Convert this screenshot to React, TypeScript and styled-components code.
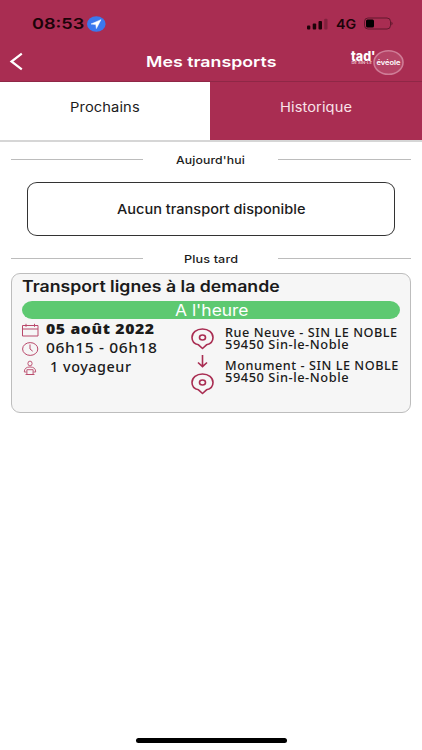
import React, { useLayoutEffect, useRef, useState } from "react";
import styled, { createGlobalStyle } from "styled-components";

const brand = "#a92d52";

const GlobalStyle = createGlobalStyle`
  * { box-sizing: border-box; }
  html, body { margin: 0; background: #fff; }
  body { font-family: Inter, "Liberation Sans", sans-serif; color: #1b1b1b; }
`;

/* Text widened to fill a given width */
const FitBox = styled.span<{ $w: number }>`
  display: block;
  width: ${(p) => p.$w}px;
  flex: none;
  white-space: pre;
`;
const FitInner = styled.span`
  display: inline-block;
  transform-origin: 0 50%;
`;
function Fit({ w, children }: { w: number; children: string }) {
  const ref = useRef<HTMLSpanElement>(null);
  const [scale, setScale] = useState(1);
  useLayoutEffect(() => {
    if (ref.current) setScale(w / ref.current.offsetWidth);
  }, [w, children]);
  return (
    <FitBox $w={w}>
      <FitInner ref={ref} style={{ transform: `scaleX(${scale})` }}>
        {children}
      </FitInner>
    </FitBox>
  );
}

const Screen = styled.div`
  width: 422px;
  height: 750px;
  display: flex;
  flex-direction: column;
  overflow: hidden;
  background: #fff;
`;
const Header = styled.header`
  height: 82px;
  flex: none;
  background: ${brand};
  border-bottom: 1px solid #8f2746;
`;
const StatusBar = styled.div`
  height: 43px;
  padding: 4px 29px 0 32px;
  display: flex;
  align-items: center;
  color: #1c0309;
  font-size: 15px;
  font-weight: 600;
  line-height: 20px;
`;
const LocationIcon = styled.svg`
  margin-left: 3px;
`;
const StatusRight = styled.div`
  margin-left: auto;
  display: flex;
  align-items: center;
  gap: 8px;
  font-size: 13.5px;
`;
const NavBar = styled.div`
  height: 38px;
  display: grid;
  grid-template-columns: 146px 1fr 72px;
  align-items: center;
`;
const BackIcon = styled.svg`
  margin-left: 9px;
`;
const Title = styled.h1`
  margin: 0;
  color: #fff;
  font-size: 14.5px;
  font-weight: 600;
  line-height: 20px;
`;
const Tabs = styled.nav`
  display: grid;
  grid-template-columns: 210px 212px;
  height: 60px;
  flex: none;
  border-bottom: 2px solid #d6d6d6;
`;
const Tab = styled.div<{ $filled?: boolean }>`
  display: flex;
  justify-content: center;
  padding-top: 15px;
  font-size: 13px;
  line-height: 20px;
  letter-spacing: 0.1px;
  background: ${(p) => (p.$filled ? brand : "#fff")};
  color: ${(p) => (p.$filled ? "#f9e3ea" : "#1b1b1b")};
`;
const Divider = styled.div`
  display: grid;
  grid-template-columns: 132px 1fr 133px;
  align-items: center;
  justify-items: center;
  margin: 0 11px;
  height: 20px;
  flex: none;
  font-size: 11px;
  font-weight: 500;
  line-height: 20px;
  letter-spacing: 0.1px;
`;
const Rule = styled.div`
  width: 100%;
  height: 1px;
  background: #bcbcbc;
  margin-bottom: 2px;
`;
const Content = styled.main`
  display: flex;
  flex-direction: column;
  padding-top: 8px;
`;
const EmptyBox = styled.div`
  margin: 12px 27px 13px;
  width: 368px;
  height: 54px;
  flex: none;
  border: 1px solid #333;
  border-radius: 10px / 9px;
  display: flex;
  align-items: center;
  justify-content: center;
  font-size: 13px;
  font-weight: 500;
`;
const Card = styled.section`
  margin: 4px 11px 0;
  height: 140px;
  flex: none;
  padding: 3px 10px 0;
  border: 1px solid #bdbdbd;
  border-radius: 9px;
  background: #f6f6f6;
`;
const CardTitle = styled.h2`
  margin: 0;
  font-size: 15.5px;
  font-weight: 600;
  line-height: 20px;
`;
const Status = styled.div`
  margin-top: 4px;
  height: 18px;
  border-radius: 10px / 9px;
  background: #5dc971;
  color: #fff;
  display: flex;
  justify-content: center;
  font-size: 15.5px;
  line-height: 19px;
`;
const Details = styled.div`
  display: grid;
  grid-template-columns: 168px 35px 1fr;
`;
const Info = styled.div`
  padding-top: 1px;
`;
const InfoRow = styled.div<{ $bold?: boolean; $indent?: number }>`
  height: 19px;
  display: grid;
  grid-template-columns: ${(p) => 24 + (p.$indent || 0)}px 1fr;
  align-items: center;
  font-family: "Noto Sans", sans-serif;
  font-size: 13.5px;
  line-height: 19px;
  letter-spacing: 0.5px;
  font-weight: ${(p) => (p.$bold ? 900 : 500)};
`;
const Route = styled.svg`
  margin-top: 8px;
`;
const Stops = styled.div`
  padding-top: 7px;
  display: flex;
  flex-direction: column;
  gap: 9px;
`;
const Stop = styled.div`
  font-family: "Noto Sans", sans-serif;
  font-size: 11.8px;
  font-weight: 500;
  line-height: 12px;
  letter-spacing: 0.5px;
`;
const HomeBar = styled.div`
  width: 151px;
  height: 5px;
  flex: none;
  border-radius: 3px;
  background: #000;
  margin: auto auto 7px 136px;
`;

function Logo() {
  return (
    <svg width="56" height="28" viewBox="0 0 56 28">
      <ellipse cx="38.500" cy="14.500" rx="14.500" ry="11.800" fill="#b54466" stroke="#cf7c96" strokeWidth="1.600" />
      <g fill="#fff" fontFamily="Inter, sans-serif">
        <text x="1" y="13" fontSize="13" fontWeight="800" textLength="24.500" lengthAdjust="spacingAndGlyphs">tad'</text>
        <text x="1.500" y="16.400" fontSize="3.300" fontWeight="600" fill="#f1ccd7" textLength="20.500" lengthAdjust="spacingAndGlyphs">DE SIN-LE</text>
        <text x="26.500" y="16.800" fontSize="6.800" fontWeight="600" textLength="24" lengthAdjust="spacingAndGlyphs">évéole</text>
      </g>
    </svg>
  );
}

const CalendarIcon = () => (
  <svg width="18" height="14" viewBox="0 0 18 14" fill="none" stroke="#b9486a" strokeWidth="1">
    <path d="M.5 2.500h15.500v10.500H.5zM.5 6h15.500M4 .8v3M12.500 .8v3" />
  </svg>
);
const ClockIcon = () => (
  <svg width="18" height="15" viewBox="0 0 18 15" fill="none" stroke="#b9486a" strokeWidth="1">
    <ellipse cx="8.200" cy="8" rx="7.600" ry="6.400" />
    <path d="M8 3.500v4.500l2.700 2.200" />
  </svg>
);
const TravellerIcon = () => (
  <svg width="18" height="16" viewBox="0 0 18 16" fill="none" stroke="#b9486a" strokeWidth=".9">
    <ellipse cx="8" cy="3.500" rx="2.100" ry="2.400" />
    <path d="M4.500 12H2.300c0-3.500 2-5 5.700-5s5.700 1.500 5.700 5h-2.200M4.900 9.700h6.200v4.800H4.900zM3.500 14.500h9" />
  </svg>
);

function Status4G() {
  return (
    <StatusRight>
      <svg width="21" height="12" viewBox="0 0 21 12" fill="#1c0309">
        <rect x="0" y="7.500" width="3.300" height="4" rx="1" />
        <rect x="5.700" y="5.500" width="3.500" height="6" rx="1" />
        <rect x="11.500" y="3" width="3.500" height="8.500" rx="1" />
        <rect x="17.200" y=".7" width="3.300" height="10.800" rx="1" opacity=".28" />
      </svg>
      <Fit w={20}>4G</Fit>
      <svg width="29" height="13" viewBox="0 0 29 13">
        <rect x=".5" y="1" width="26" height="11" rx="3.500" fill="none" stroke="#1c0309" strokeOpacity=".5" />
        <rect x="2" y="2.500" width="8" height="8" rx="1.500" fill="#000" />
        <path d="M27.500 4.500q2 2 0 4z" fill="#1c0309" fillOpacity=".6" />
      </svg>
    </StatusRight>
  );
}

export default function App() {
  return (
    <>
      <GlobalStyle />
      <Screen>
        <Header>
          <StatusBar>
            <Fit w={52}>08:53</Fit>
            <LocationIcon width="19" height="16" viewBox="0 0 19 16">
              <ellipse cx="9.300" cy="8" rx="9.300" ry="7.700" fill="#3b78ee" />
              <path d="M14 3.700 4 8l4.800.6.600 4z" fill="#fff" stroke="#fff" strokeWidth=".5" strokeLinejoin="round" />
            </LocationIcon>
            <Status4G />
          </StatusBar>
          <NavBar>
            <BackIcon width="16" height="20" viewBox="0 0 16 20" fill="none" stroke="#fff" strokeWidth="2.200">
              <path d="M12.800 1.700 2.500 9.500l10.300 7.800" />
            </BackIcon>
            <Title><Fit w={130}>Mes transports</Fit></Title>
            <Logo />
          </NavBar>
        </Header>
        <Tabs>
          <Tab><Fit w={70}>Prochains</Fit></Tab>
          <Tab $filled><Fit w={72}>Historique</Fit></Tab>
        </Tabs>
        <Content>
          <Divider>
            <Rule /><Fit w={69}>Aujourd'hui</Fit><Rule />
          </Divider>
          <EmptyBox><Fit w={189}>Aucun transport disponible</Fit></EmptyBox>
          <Divider>
            <Rule /><Fit w={54}>Plus tard</Fit><Rule />
          </Divider>
          <Card>
            <CardTitle><Fit w={258}>Transport lignes à la demande</Fit></CardTitle>
            <Status><Fit w={73}>A l'heure</Fit></Status>
            <Details>
              <Info>
                <InfoRow $bold><CalendarIcon /><Fit w={109}>05 août 2022</Fit></InfoRow>
                <InfoRow><ClockIcon /><Fit w={112}>06h15 - 06h18</Fit></InfoRow>
                <InfoRow $indent={4}><TravellerIcon /><Fit w={81}>1 voyageur</Fit></InfoRow>
              </Info>
              <Route width="26" height="70" viewBox="0 0 26 70" fill="none" stroke={brand} strokeWidth="1.600">
                <path id="pin" d="M12.500 21.500 8.500 17.800C4.500 17 2 14 2 10.500 2 5.500 6.500 2 12.500 2S23 5.500 23 10.500c0 3.500-2.500 6.500-6.500 7.300z" strokeLinejoin="round" />
                <ellipse cx="12.500" cy="10.500" rx="3" ry="2.500" />
                <path d="M12.500 28v11.500M8 35.500l4.500 4.200L17 35.500" />
                <use href="#pin" y="45" />
                <ellipse cx="12.500" cy="55.500" rx="3" ry="2.500" />
              </Route>
              <Stops>
                <Stop><Fit w={173}>Rue Neuve - SIN LE NOBLE</Fit><Fit w={124}>59450 Sin-le-Noble</Fit></Stop>
                <Stop><Fit w={174}>Monument - SIN LE NOBLE</Fit><Fit w={124}>59450 Sin-le-Noble</Fit></Stop>
              </Stops>
            </Details>
          </Card>
        </Content>
        <HomeBar />
      </Screen>
    </>
  );
}
